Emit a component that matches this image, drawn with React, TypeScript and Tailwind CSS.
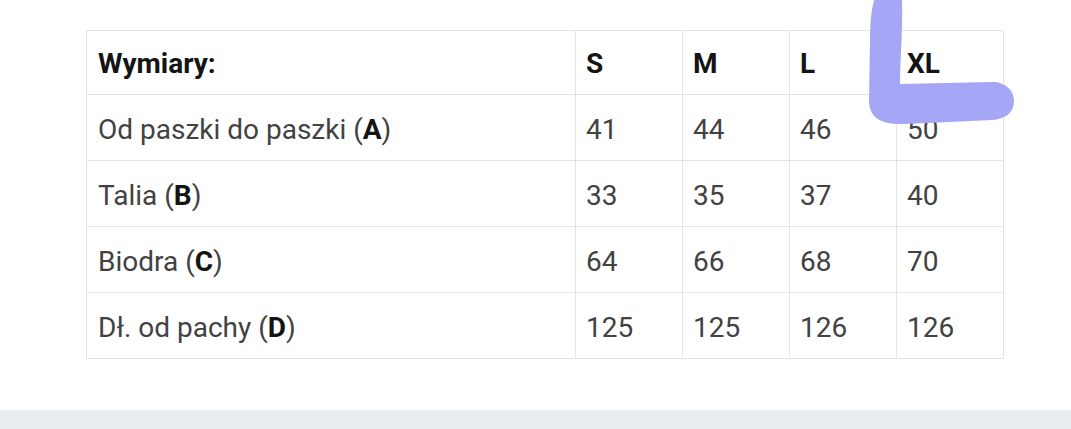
import React from "react";

const rows = [
  { label: "Od paszki do paszki", key: "A", values: ["41", "44", "46", "50"] },
  { label: "Talia", key: "B", values: ["33", "35", "37", "40"] },
  { label: "Biodra", key: "C", values: ["64", "66", "68", "70"] },
  { label: "Dł. od pachy", key: "D", values: ["125", "125", "126", "126"] },
];

const sizes = ["S", "M", "L", "XL"];

export default function App() {
  return (
    <div
      className="relative w-[1071px] h-[429px] overflow-hidden bg-white"
      style={{ fontFamily: "Roboto, 'Liberation Sans', sans-serif" }}
    >
      <div className="h-[410px] pt-[30px] pl-[86px]">
        <div className="grid w-[917px] grid-cols-[489px_107px_107px_107px_107px] border-t border-l border-[#e4e4e4] text-[28px] text-[#424242]">
          {/* header */}
          <div className="h-[64px] flex items-center pl-[11px] pt-[2px] border-r border-b border-[#e4e4e4] font-bold text-[#141414]">
            Wymiary:
          </div>
          {sizes.map((s) => (
            <div
              key={s}
              className="h-[64px] flex items-center pl-[10px] pt-[2px] border-r border-b border-[#e4e4e4] font-bold text-[#141414]"
            >
              {s}
            </div>
          ))}

          {rows.map((r) => (
            <React.Fragment key={r.key}>
              <div className="h-[66px] flex items-center pl-[11px] pt-[4px] border-r border-b border-[#e4e4e4]">
                <span>
                  {r.label} (<b className="font-bold text-[#141414]">{r.key}</b>)
                </span>
              </div>
              {r.values.map((v, i) => (
                <div
                  key={i}
                  className="h-[66px] flex items-center pl-[10px] pt-[4px] border-r border-b border-[#e4e4e4]"
                >
                  {v}
                </div>
              ))}
            </React.Fragment>
          ))}
        </div>
      </div>
      <div className="h-[19px] bg-[#e9edf0]" />

      {/* highlighter mark */}
      <svg
        className="absolute left-0 top-0 pointer-events-none"
        width="1071"
        height="429"
        viewBox="0 0 1071 429"
      >
        <path
          d="M875 -2 L902 -2 C903 30 900 60 900 84 L992 82 C1005 82 1014 90 1014 101 C1014 113 1005 119 992 120 L905 124 C885 125 870 120 869 102 L870 40 C870 20 872 5 875 -2 Z"
          fill="#a5a6f6"
        />
      </svg>
    </div>
  );
}
